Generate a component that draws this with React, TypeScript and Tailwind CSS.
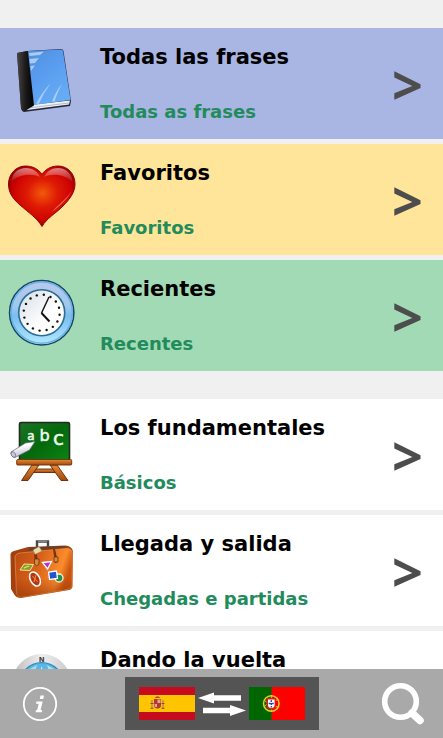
import type { ReactNode } from "react";

function BookIcon() {
  return (
    <svg viewBox="0 0 68 68" className="size-full" aria-hidden="true">
      <defs>
        <linearGradient id="bookCover" x1="0" y1="0" x2="0.6" y2="1">
          <stop offset="0" stopColor="#4f8fdc" />
          <stop offset="0.5" stopColor="#5a9df0" />
          <stop offset="1" stopColor="#66acf4" />
        </linearGradient>
        <linearGradient id="bookSpine" x1="0" y1="0" x2="1" y2="0">
          <stop offset="0" stopColor="#4a4644" />
          <stop offset="0.5" stopColor="#1c1a1a" />
          <stop offset="1" stopColor="#000" />
        </linearGradient>
      </defs>
      <path d="M9 6 L19 4 L53 2 Q55 2 55.500 4 L63 54 L62 59 L16 65 Q13.500 64 13 61Z" fill="#25293c" />
      <path d="M21 58 L62 53.500 L61 57.500 L19 63Z" fill="#eef1f4" />
      <path d="M20 61 L61 56" stroke="#9aa2ad" strokeWidth="0.7" />
      <path d="M9 6 L20 4 L26 58.500 L16 64.500 Q13.500 64 13 61Z" fill="url(#bookSpine)" />
      <path d="M20 4 L53.500 2.500 Q54.500 2.500 55 4 L62.500 53 L26 58Z" fill="url(#bookCover)" />
      <path d="M21 6 L36 4.500 L32 8 L21.500 9Z M21.500 12 L31 11 L27 16 L22 16.500Z M22.500 19 L27 18.500 L23 24Z" fill="#b7d3f6" opacity="0.85" />
      <path d="M28 57 Q34 45 43 36 Q36 45 31 56.500Z M44 54.500 Q48 44 54 37 Q49 46 46.500 54.500Z" fill="#cde3fb" opacity="0.65" />
    </svg>
  );
}

function HeartIcon() {
  const shape =
    "M34 63.500 C29 55 21 50 12 42 C4 35 0.500 29 0.500 21 C0.500 11 8 3 17.500 3 C25 3 31 6.500 34 11.500 C37 6.500 43 3 50 3 C60 3 67 11 67 21 C67 29 62 36 55 43 C47 51 39 55 34 63.500Z";
  return (
    <svg viewBox="0 0 68 68" className="size-full" aria-hidden="true">
      <defs>
        <radialGradient id="heartFill" cx="0.51" cy="0.45" r="0.52">
          <stop offset="0" stopColor="#f25a0a" />
          <stop offset="0.45" stopColor="#de1a04" />
          <stop offset="0.85" stopColor="#cc0202" />
          <stop offset="1" stopColor="#a00000" />
        </radialGradient>
        <linearGradient id="heartGloss" x1="0" y1="0" x2="0" y2="1">
          <stop offset="0" stopColor="#fff" stopOpacity="0.5" />
          <stop offset="1" stopColor="#fff" stopOpacity="0" />
        </linearGradient>
      </defs>
      <path d={shape} fill="url(#heartFill)" stroke="#8e0505" strokeWidth="1" />
      <path d="M3 20 C4 10 10 5 18 5 C25 5 30 9 32 14 C24 10 9 11 3 20Z" fill="url(#heartGloss)" />
      <path d="M36 14 C39 8 44 5 50 5 C58 5 64 11 65 20 C58 11 44 10 36 14Z" fill="url(#heartGloss)" />
      <path d="M63.500 28 C60 36 52 43 44 49 C49 42 58 37 63.500 28Z" fill="#fff" opacity="0.35" />
    </svg>
  );
}

function ClockIcon() {
  const ticks = Array.from({ length: 16 }, (_, i) => ((i + 0.3) * Math.PI) / 8);
  return (
    <svg viewBox="0 0 68 68" className="size-full" aria-hidden="true">
      <defs>
        <linearGradient id="clockRim" x1="0" y1="0" x2="0" y2="1">
          <stop offset="0" stopColor="#b9c9ec" />
          <stop offset="0.4" stopColor="#9fc8ee" />
          <stop offset="0.55" stopColor="#79bdf0" />
          <stop offset="1" stopColor="#b4eaff" />
        </linearGradient>
        <linearGradient id="clockFace" x1="0" y1="0" x2="1" y2="1">
          <stop offset="0" stopColor="#d3dce6" />
          <stop offset="0.6" stopColor="#fff" />
        </linearGradient>
      </defs>
      <circle cx="33.700" cy="33.700" r="32.200" fill="url(#clockRim)" stroke="#1d4463" strokeWidth="1.500" />
      <circle cx="33.700" cy="33.700" r="30.600" fill="none" stroke="#67b5e4" strokeWidth="1.500" />
      <circle cx="33.700" cy="33.700" r="23" fill="url(#clockFace)" stroke="#2b6d94" strokeWidth="1.600" />
      {ticks.map((a) => (
        <circle key={a} cx={33.7 + 18 * Math.cos(a)} cy={33.7 + 18 * Math.sin(a)} r="1.200" fill="#111" />
      ))}
      <path d="M41 18 L33.500 34" stroke="#111" strokeWidth="1.400" fill="none" />
      <path d="M33.500 34 L41.500 42.500" stroke="#111" strokeWidth="2" />
    </svg>
  );
}

function BoardIcon() {
  return (
    <svg viewBox="0 0 68 68" className="size-full" aria-hidden="true">
      <defs>
        <linearGradient id="boardGreen" x1="0" y1="0" x2="1" y2="1">
          <stop offset="0" stopColor="#1d7325" />
          <stop offset="0.5" stopColor="#04680c" />
          <stop offset="1" stopColor="#0b8514" />
        </linearGradient>
        <linearGradient id="boardWood" x1="0" y1="0" x2="0" y2="1">
          <stop offset="0" stopColor="#e58a35" />
          <stop offset="1" stopColor="#a4480d" />
        </linearGradient>
        <linearGradient id="boardChalk" x1="0.300" y1="0" x2="0.600" y2="1">
          <stop offset="0.300" stopColor="#fff" />
          <stop offset="1" stopColor="#b3b4c6" />
        </linearGradient>
      </defs>
      <g fill="url(#boardWood)" stroke="#5d2708" strokeWidth="0.900">
        <path d="M22 51 H51 V54.500 H20Z" />
        <path d="M24 47 H31 L20 62.500 H13.500Z" />
        <path d="M42 47 H49 L60 62.500 H53Z" />
      </g>
      <rect x="11.500" y="4.500" width="50" height="38" rx="1.500" fill="url(#boardGreen)" stroke="#222b22" strokeWidth="1.600" />
      <rect x="8.700" y="41.500" width="55" height="5.500" rx="1" fill="url(#boardWood)" stroke="#6c300d" strokeWidth="0.900" />
      <g fill="#eefbe9" stroke="#eefbe9" strokeWidth="0.500" fontFamily="'DejaVu Sans', sans-serif" textAnchor="middle">
        <text x="23" y="21.500" fontSize="12">a</text>
        <text x="36.500" y="23" fontSize="16">b</text>
        <text x="50.500" y="26.500" fontSize="20">c</text>
      </g>
      <path d="M27 23.500 L21.500 32 L7 39.500 Q3 39 3 34 L17.500 25Z" fill="url(#boardChalk)" stroke="#63657c" strokeWidth="0.700" />
      <ellipse cx="5.300" cy="36.500" rx="2" ry="3" transform="rotate(-30 5.300 36.500)" fill="#c9cad8" stroke="#63657c" strokeWidth="0.700" />
    </svg>
  );
}

function SuitcaseIcon() {
  return (
    <svg viewBox="0 0 68 68" className="size-full" aria-hidden="true">
      <defs>
        <linearGradient id="caseFront" x1="0" y1="0" x2="1" y2="0.300">
          <stop offset="0" stopColor="#b84a10" />
          <stop offset="0.450" stopColor="#d8601a" />
          <stop offset="0.850" stopColor="#fb8c2c" />
          <stop offset="1" stopColor="#c9530f" />
        </linearGradient>
        <linearGradient id="caseShade" x1="0" y1="0" x2="0" y2="1">
          <stop offset="0.600" stopColor="#8c2f06" stopOpacity="0" />
          <stop offset="1" stopColor="#8c2f06" stopOpacity="0.600" />
        </linearGradient>
      </defs>
      <path d="M29 15 V7.500 H40 V13" fill="none" stroke="#45474a" strokeWidth="2.400" />
      <path d="M30 7.300 H39" stroke="#aaa" strokeWidth="0.800" />
      <path d="M2.500 20 Q3 17.500 6 17 L20 13 L57 11.500 Q64.500 12 65 18 L64.500 52 Q64.500 55 61 56 L13 64 Q8 64 6 60 L3 55Z" fill="#a2410f" />
      <path d="M7 24 Q7 19.500 12 19 L58 14.500 Q64 14 64.300 19 L64 51 Q64 54.500 60 55.300 L14 63 Q9 63 8.500 58Z" fill="url(#caseFront)" stroke="#f29a50" strokeWidth="0.600" />
      <path d="M7 24 Q7 19.500 12 19 L58 14.500 Q64 14 64.300 19 L64 51 Q64 54.500 60 55.300 L14 63 Q9 63 8.500 58Z" fill="url(#caseShade)" />
      <path d="M20 17 L22 13.500 L55 12 L59 13.500Z" fill="#65412d" />
      <path d="M28 17 L31 31 L27 30 L26 18Z M47 15 L50 28 L47 29 L45 15Z" fill="#7a310e" />
      <path d="M26.500 25 H31 V30 L28.500 32 L26.500 30Z M46 23 H50 V28 H46Z" fill="#d18a35" stroke="#713012" strokeWidth="0.800" />
      <path d="M25 16 L31 12.500 L34 17 L27 20.500Z" fill="#e9dcaf" stroke="#8a7450" strokeWidth="0.500" />
      <path d="M12 36 L16 30 L25.500 30.500 L22 36.500Z" fill="#8f9e22" stroke="#efe2a0" strokeWidth="1" />
      <path d="M16 34 L21 32" stroke="#dfe27a" strokeWidth="1.200" />
      <ellipse cx="27" cy="45" rx="4.700" ry="7.500" transform="rotate(-28 27 45)" fill="#b6370f" stroke="#fff" strokeWidth="1.500" />
      <path d="M24.500 42 L29.500 48 M28 41 L26 48" stroke="#ef8c50" strokeWidth="1" />
      <path d="M34.500 28.500 L43.500 27.500 L39.500 35Z" fill="#b431c4" stroke="#fff" strokeWidth="1.300" />
      <circle cx="51" cy="44" r="4" fill="#1e9140" stroke="#f5efe4" strokeWidth="1.300" />
      <rect x="41" y="37.500" width="8" height="7.500" transform="rotate(-8 45 41)" fill="#1f56cf" stroke="#fff" strokeWidth="1.300" />
    </svg>
  );
}

function CompassIcon() {
  return (
    <svg viewBox="0 0 68 68" className="size-full" aria-hidden="true">
      <defs>
        <linearGradient id="compassRim" x1="0" y1="0" x2="1" y2="0">
          <stop offset="0" stopColor="#bcb9bb" />
          <stop offset="0.500" stopColor="#efeeef" />
          <stop offset="1" stopColor="#c9c7c9" />
        </linearGradient>
      </defs>
      <circle cx="33.700" cy="33.500" r="29.500" fill="url(#compassRim)" />
      <circle cx="33.700" cy="35" r="22.300" fill="#58b7e6" stroke="#2e8cbd" strokeWidth="1.300" />
      <path d="M33.700 16 L38 35 L33.700 54 L29.500 35Z" fill="#e8f6fd" />
      <path d="M22 19 L29 15 L27 21Z M39 15 L46 19 L41 21Z" fill="#a9def5" />
      <text x="33.700" y="11.500" fontSize="7" fontWeight="bold" textAnchor="middle" fontFamily="'DejaVu Sans', sans-serif" fill="#444">
        N
      </text>
    </svg>
  );
}

function SpainFlag() {
  return (
    <svg viewBox="0 0 56 33" className="h-[33px] w-14" role="img" aria-label="Español">
      <rect width="56" height="33" fill="#c60b1e" />
      <rect y="8" width="56" height="17" fill="#ffc400" />
      <path d="M15 12 H22 V18 Q22 21.500 18.500 21.500 Q15 21.500 15 18Z" fill="#b5382f" />
      <path d="M18.500 12.500 H21.500 V16 H18.500Z M15.500 17 H18 V20 H16Z" fill="#d9a79b" />
      <path d="M15.500 11 Q18.500 7.500 21.500 11Z" fill="#a5521d" />
      <path d="M13 13 V21 M24 13 V21" stroke="#a78a76" strokeWidth="1.400" />
      <path d="M11.500 16.500 H14.500 M22.500 16.500 H25.500 M11.500 21.300 H14.500 M22.500 21.300 H25.500" stroke="#a5421d" strokeWidth="1" />
    </svg>
  );
}

function PortugalFlag() {
  return (
    <svg viewBox="0 0 56 33" className="h-[33px] w-14" role="img" aria-label="Português">
      <rect width="56" height="33" fill="#f00" />
      <rect width="22.500" height="33" fill="#060" />
      <circle cx="22.300" cy="16.500" r="7.800" fill="none" stroke="#e8d421" strokeWidth="1.500" />
      <path d="M15 13 Q22 20 29.500 20 M15 20 Q22 12 29.500 13 M22.300 9 V24" fill="none" stroke="#e8d421" strokeWidth="0.900" />
      <path d="M17.500 11 H27 V18 Q27 22.500 22.300 22.500 Q17.500 22.500 17.500 18Z" fill="#e01818" />
      <path d="M19 12.500 H25.600 V18 Q25.600 21 22.300 21 Q19 21 19 18Z" fill="#fff" />
      <path d="M22.300 13 V20.500 M19.700 16.500 H25" stroke="#2546a8" strokeWidth="1.300" strokeDasharray="2 1" />
    </svg>
  );
}

function SwapArrows() {
  return (
    <svg viewBox="0 0 50 28" className="h-7 w-[50px]" aria-hidden="true">
      <path d="M1 8 L17 2.500 V5.200 H44 V10.800 H17 V13.500Z" fill="#fff" />
      <path d="M49 20.500 L33 15 V17.700 H6 V23.300 H33 V26Z" fill="#fff" />
    </svg>
  );
}

type Entry = { title: string; translation: string; icon: ReactNode; tone: string };

const shortcuts: Entry[] = [
  { title: "Todas las frases", translation: "Todas as frases", icon: <BookIcon />, tone: "bg-[#a9b5e2]" },
  { title: "Favoritos", translation: "Favoritos", icon: <HeartIcon />, tone: "bg-[#ffe599]" },
  { title: "Recientes", translation: "Recentes", icon: <ClockIcon />, tone: "bg-[#a2dab5]" },
];

const categories: Entry[] = [
  { title: "Los fundamentales", translation: "Básicos", icon: <BoardIcon />, tone: "bg-white" },
  { title: "Llegada y salida", translation: "Chegadas e partidas", icon: <SuitcaseIcon />, tone: "bg-white" },
  { title: "Dando la vuelta", translation: "Dando a volta", icon: <CompassIcon />, tone: "bg-white" },
];

function EntryRow({ title, translation, icon, tone }: Entry) {
  return (
    <li>
      <button type="button" className={`flex h-[111px] w-full items-center pr-5 pl-2 text-left ${tone}`}>
        <span className="mb-1.5 size-[68px] shrink-0">{icon}</span>
        <span className="ml-6 flex min-w-0 flex-1 flex-col gap-[27px] pt-px font-bold">
          <span className="text-[21px] leading-7 text-black">{title}</span>
          <span className="text-lg leading-7 text-[#228b5c]">{translation}</span>
        </span>
        <span className="font-['Open_Sans','Noto_Sans',sans-serif] text-[54px] leading-none font-bold text-[#4d4d4d]" aria-hidden="true">
          &gt;
        </span>
      </button>
    </li>
  );
}

function EntryList({ entries }: { entries: Entry[] }) {
  return (
    <ul className="flex flex-col gap-[5px]">
      {entries.map((entry) => (
        <EntryRow key={entry.title} {...entry} />
      ))}
    </ul>
  );
}

export default function App() {
  return (
    <div className="flex h-screen flex-col bg-[#f0f0f0] font-['Verdana','DejaVu_Sans',sans-serif]">
      <main className="flex min-h-0 flex-1 flex-col gap-7 overflow-hidden pt-7">
        <EntryList entries={shortcuts} />
        <EntryList entries={categories} />
      </main>
      <footer className="grid shrink-0 grid-cols-[1fr_auto_1fr] items-center bg-[#a9a9a9] px-[18px] py-2">
        <button type="button" aria-label="Información" className="ml-1 justify-self-start">
          <svg viewBox="0 0 36 36" className="size-9" aria-hidden="true">
            <circle cx="18" cy="18" r="16.200" fill="none" stroke="#fff" strokeWidth="1.800" />
            <path d="M18.500 9.500 H22 L21.300 13 H17.800Z M14.500 15.500 H20.700 L18.600 24 H20.200 L19.700 26.300 H13.500 L14 24 H15.200 L16.700 17.800 H14Z" fill="#fff" />
          </svg>
        </button>
        <button type="button" aria-label="Intercambiar idiomas" className="flex h-[53px] w-[194px] items-center justify-center gap-0.5 bg-[#545454]">
          <SpainFlag />
          <SwapArrows />
          <PortugalFlag />
        </button>
        <button type="button" aria-label="Buscar" className="justify-self-end">
          <svg viewBox="0 0 44 44" className="size-11" aria-hidden="true">
            <circle cx="19.500" cy="19.500" r="15.800" fill="none" stroke="#fff" strokeWidth="5.600" />
            <path d="M31 31 L39 38.500" stroke="#fff" strokeWidth="7.500" strokeLinecap="round" />
          </svg>
        </button>
      </footer>
    </div>
  );
}
